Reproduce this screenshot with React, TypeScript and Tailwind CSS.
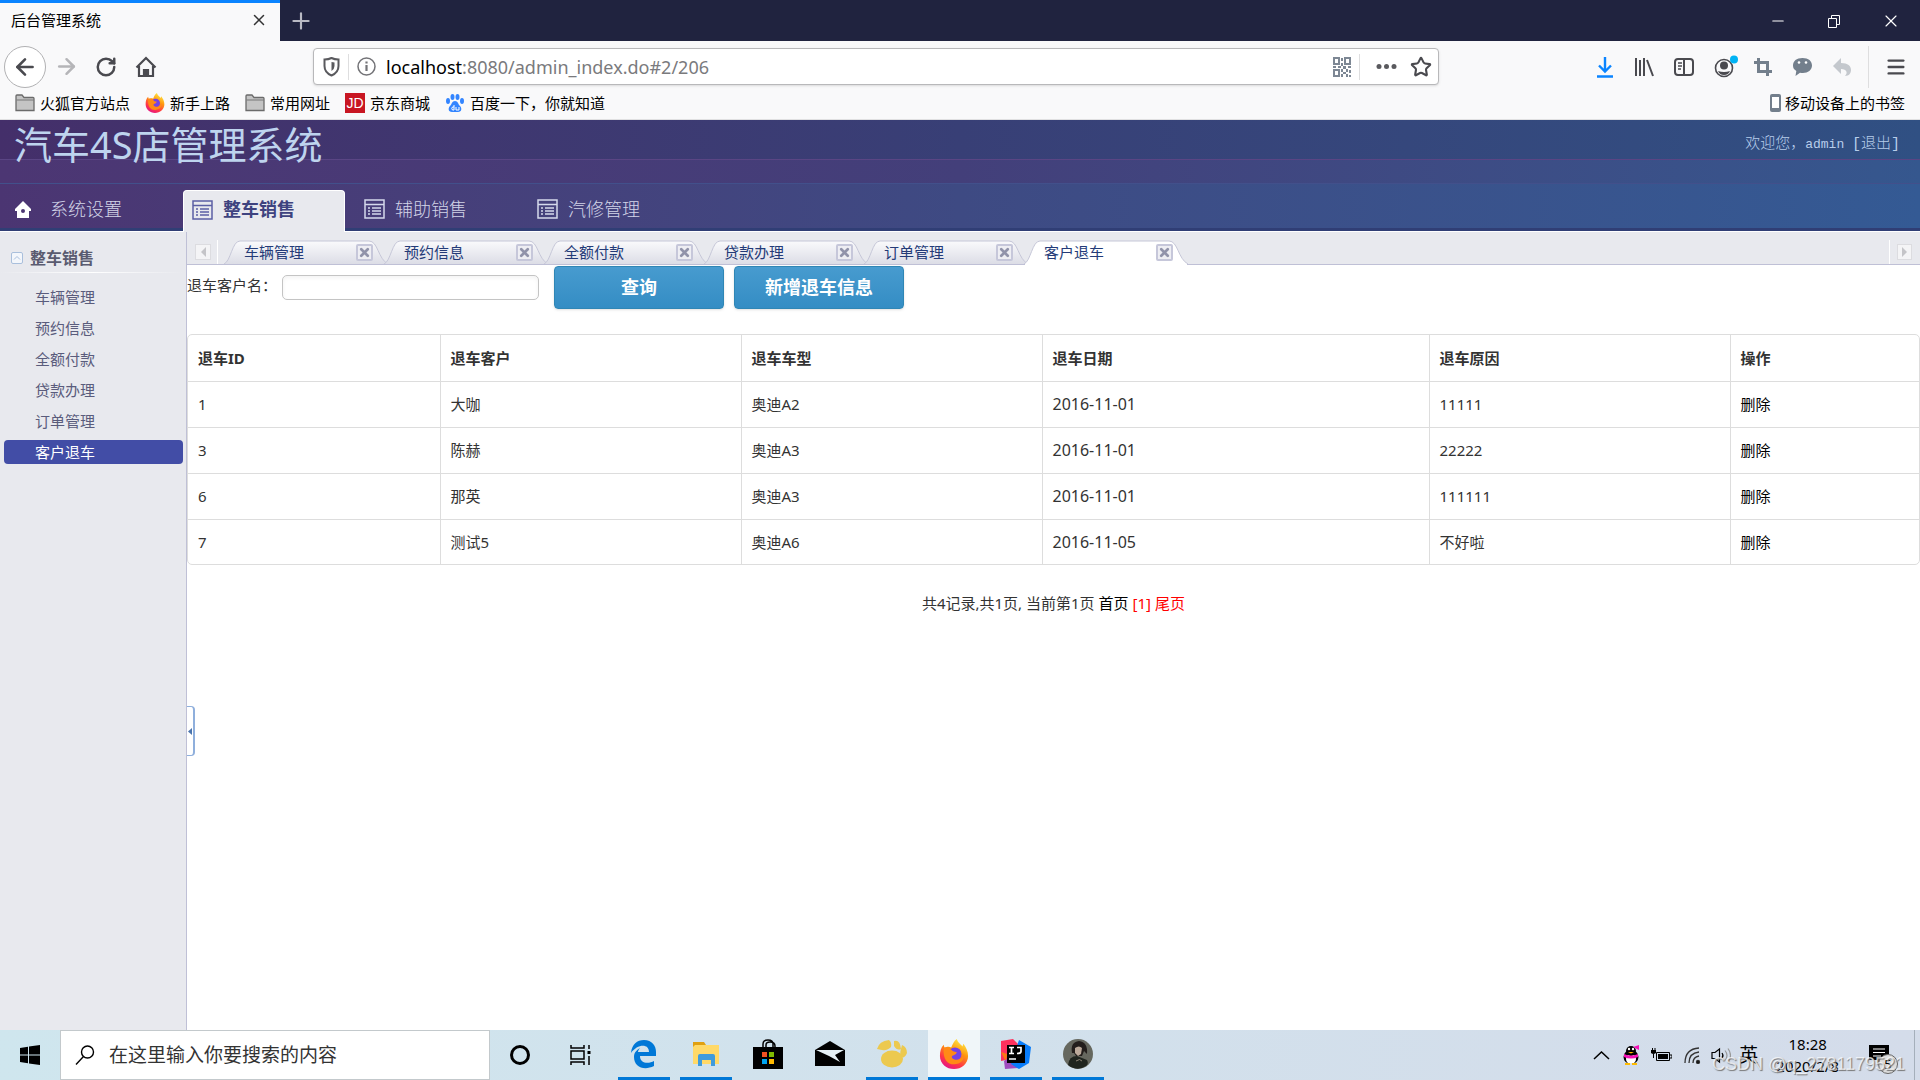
import React, { useState } from "react";
import {
  ArrowLeft,
  ArrowRight,
  Menu,
  Minus,
  Plus,
  RotateCw,
  Star,
  X,
} from "lucide-react";

const menus = ["系统设置", "整车销售", "辅助销售", "汽修管理"];
const pages = ["车辆管理", "预约信息", "全额付款", "贷款办理", "订单管理", "客户退车"];
const heads = ["退车ID", "退车客户", "退车车型", "退车日期", "退车原因", "操作"];
const rows = [
  { id: 1, name: "大咖", car: "奥迪A2", date: "2016-11-01", reason: "11111" },
  { id: 3, name: "陈赫", car: "奥迪A3", date: "2016-11-01", reason: "22222" },
  { id: 6, name: "那英", car: "奥迪A3", date: "2016-11-01", reason: "111111" },
  { id: 7, name: "测试5", car: "奥迪A6", date: "2016-11-05", reason: "不好啦" },
];

function FolderIcon() {
  return (
    <svg width="20" height="18" viewBox="0 0 20 18">
      <path d="M1 16.500V2q0-1 1-1h5l2 2.500h9q1 0 1 1v12z" fill="#c4c4c4" stroke="#6b6b6b" strokeWidth="1.300" />
      <path d="M1.500 6H19" stroke="#777" />
    </svg>
  );
}

function FirefoxIcon({ size }: { size: number }) {
  return (
    <svg width={size} height={size} viewBox="0 0 32 32">
      <defs>
        <linearGradient id="fox" x1="0.8" y1="0" x2="0.3" y2="1">
          <stop offset="0" stopColor="#fff44f" />
          <stop offset="0.4" stopColor="#ff980e" />
          <stop offset="0.75" stopColor="#ff3647" />
          <stop offset="1" stopColor="#e31587" />
        </linearGradient>
      </defs>
      <path d="M19 0c1 4 4 5 6 8l1-3c3 4 5 8 5 13 0 8-7 14-15 14S1 26 1 18c0-5 1-9 4-12l1 4c2-2 5-2 7-1 2-4 3-7 6-9z" fill="url(#fox)" />
      <circle cx="17" cy="16" r="7" fill="#7542e5" />
      <path d="M5 9c4-1 7 1 10 4l4 1c-1 3-4 3-5 4s0 4 5 4 6-3 7-6c2 6-3 11-10 11C9 27 4 22 5 9z" fill="#ff8a16" />
    </svg>
  );
}

function ListIcon({ active }: { active: boolean }) {
  const color = active ? "#5b5fa5" : "#d5d9ec";
  return (
    <svg width="21" height="20" viewBox="0 0 21 20" fill="none" stroke={color} strokeWidth="1.500">
      <path d="M1 1h19v18H1zM1 5.500h19M4 9h2M8 9h9M4 12h2M8 12h9M4 15h2M8 15h9" />
    </svg>
  );
}

function BrowserTop() {
  return (
    <div className="shrink-0 bg-[#f9f9fa] text-[15px] leading-5 text-black">
      <div className="flex h-[41px] items-stretch bg-[#20233f]">
        <div className="flex w-[280px] items-center justify-between border-t-[3px] border-[#0a84ff] bg-[#f9f9fa] pb-1 pl-[11px] pr-3">
          <span>后台管理系统</span>
          <button aria-label="关闭标签页"><X size={18} strokeWidth={2} color="#333" /></button>
        </div>
        <button aria-label="新标签页" className="ml-2 self-center"><Plus size={26} strokeWidth={2} color="#b9bac4" /></button>
        <div className="ml-auto flex items-center gap-[38px] pr-[19px] text-white">
          <button aria-label="最小化"><Minus size={18} strokeWidth={1.4} /></button>
          <button aria-label="还原">
            <svg width="18" height="18" viewBox="0 0 18 18" fill="none" stroke="white"><path d="M3.500 6.500h8v9h-8zM6.500 6V3.500h8v9H12" /></svg>
          </button>
          <button aria-label="关闭"><X size={20} strokeWidth={1.4} /></button>
        </div>
      </div>
      <div className="flex h-[51px] items-center pl-1 pr-[13px] text-[#4a4a4f]">
        <button aria-label="后退" className="flex size-[42px] items-center justify-center rounded-full border border-[#b1b1b3] bg-white"><ArrowLeft size={26} strokeWidth={2.4} /></button>
        <button aria-label="前进" className="ml-2 text-[#b5b5b8]"><ArrowRight size={25} strokeWidth={2.4} /></button>
        <button aria-label="刷新" className="ml-4"><RotateCw size={22} strokeWidth={2.7} /></button>
        <button aria-label="主页" className="ml-[18px]">
          <svg width="22" height="22" viewBox="0 0 22 22" fill="none" stroke="#4a4a4f" strokeWidth="2.200"><path d="M1.500 11.500 11 2l9.500 9.500M4 10v10h14V10" /><path d="M9 20v-6h4v6" fill="#4a4a4f" /></svg>
        </button>
        <div className="ml-[156px] flex h-[37px] w-[1126px] items-center rounded-sm border border-[#b8b8ba] bg-white shadow-sm">
          <svg className="ml-[9px]" width="17" height="20" viewBox="0 0 17 20" fill="none" stroke="#5a5a5e" strokeWidth="2"><path d="M1.500 2.500q4 0 7-1.500 3 1.500 7 1.500V9q0 6.500-7 9.500-7-3-7-9.500z" /><path d="M8.500 5v9q3-2 3-5V5.500z" fill="#5a5a5e" stroke="none" /></svg>
          <div className="mx-2 h-[26px] w-px bg-[#dededf]" />
          <svg width="19" height="19" viewBox="0 0 19 19" fill="none" stroke="#737377" strokeWidth="1.500"><circle cx="9.500" cy="9.500" r="8.500" /><path d="M9.500 8v6M9.500 4.500v2" strokeWidth="2.200" /></svg>
          <div className="ml-[10px] flex-1 font-['Noto_Sans',sans-serif] text-[18px] text-[#7a7a7d]"><span className="text-black">localhost</span>:8080/admin_index.do#2/206</div>
          <svg width="18" height="20" viewBox="0 0 18 20" fill="#7d8794">
            <path fillRule="evenodd" d="M0 0h7v8H0zM2 2v4h3V2zM11 0h7v8h-7zM13 2v4h3V2zM0 12h7v8H0zM2 14v4h3v-4z" />
            <path d="M8 1h2v3H8zM8 6h2v3H8zM0 9h3v2H0zM5 9h3v2H5zM10 9h3v3h-3zM15 9h3v2h-3zM8 12h2v3H8zM13 12h2v3h-2zM16 13h2v3h-2zM10 15h3v2h-3zM8 17h2v3H8zM13 17h2v3h-2zM16 18h2v2h-2z" />
          </svg>
          <div className="mx-2 h-[26px] w-px bg-[#dededf]" />
          <button aria-label="页面操作" className="ml-2">
            <svg width="21" height="7" viewBox="0 0 21 7" fill="#5a5a5e"><circle cx="3" cy="3.500" r="2.500" /><circle cx="10.500" cy="3.500" r="2.500" /><circle cx="18" cy="3.500" r="2.500" /></svg>
          </button>
          <button aria-label="收藏" className="ml-[13px] mr-[6px]"><Star size={22} strokeWidth={2.3} /></button>
        </div>
        <div className="ml-auto flex items-center gap-5">
          <svg width="18" height="22" viewBox="0 0 18 22" fill="none" stroke="#0a84ff" strokeWidth="2.400"><path d="M9 1v14M3 9.500l6 6 6-6M1 20.500h16" /></svg>
          <svg width="20" height="20" viewBox="0 0 20 20" fill="none" stroke="#4a4a4f" strokeWidth="2"><path d="M2 1v18M6 3v16M10 1v18M13 3l6 16" /></svg>
          <svg width="20" height="20" viewBox="0 0 20 20" fill="none" stroke="#4a4a4f" strokeWidth="2"><rect x="1" y="2" width="18" height="16" rx="3" /><path d="M10 2v16" /><path d="M4 6h4M4 9h4M4 12h3" strokeWidth="1.300" /></svg>
          <svg width="24" height="24" viewBox="0 0 24 24"><circle cx="10" cy="13" r="8.500" fill="none" stroke="#4a4a4f" strokeWidth="1.600" /><circle cx="10" cy="10.500" r="4" fill="#4a4a4f" /><path d="M4 16q6 2 12 0-1.500 4-6 4t-6-4z" fill="#4a4a4f" /><circle cx="20" cy="4.500" r="4" fill="#00b3f4" /></svg>
          <svg className="-ml-1" width="18" height="18" viewBox="0 0 18 18" fill="none" stroke="#737f8c" strokeWidth="3"><path d="M4.500 0v13.500H18M0 4.500h13.500V18" /></svg>
          <svg width="21" height="20" viewBox="0 0 21 20"><path d="M10.500 1c6 0 9.500 3 9.500 7.500S16 16 11 16c-1 0-2 0-3-.3L3.500 19l.8-5C2 12.500 1 11 1 8.500 1 4 4.500 1 10.500 1z" fill="#737f8c" /><circle cx="7" cy="5.500" r="1.300" fill="white" /><circle cx="14" cy="5.500" r="1.300" fill="white" /></svg>
          <svg width="19" height="20" viewBox="0 0 19 20"><path d="M8 1v5c7 0 10 3 10 7 0 3-2 6-6 6 3-3 2-7-4-7v5L0 9z" fill="#c4c8cd" /></svg>
          <div className="-ml-1 h-[42px] w-px bg-[#dededf]" />
          <button aria-label="菜单" className="-ml-1"><Menu size={22} strokeWidth={2.6} /></button>
        </div>
      </div>
      <div className="flex h-7 items-center border-b border-[#e0e0e1] pb-[6px] pl-[15px] pr-[15px]">
        <a href="#" className="flex items-center gap-[5px]"><FolderIcon />火狐官方站点</a>
        <a href="#" className="ml-[15px] flex items-center gap-[5px]"><FirefoxIcon size={20} />新手上路</a>
        <a href="#" className="ml-[15px] flex items-center gap-[5px]"><FolderIcon />常用网址</a>
        <a href="#" className="ml-[15px] flex items-center gap-[5px]"><span className="flex size-5 items-center justify-center bg-[#c81623] font-['Liberation_Sans',sans-serif] text-[14px] text-white">JD</span>京东商城</a>
        <a href="#" className="ml-[15px] flex items-center gap-[5px]">
          <svg width="20" height="20" viewBox="0 0 20 20" fill="#3385ff"><ellipse cx="3" cy="8" rx="2" ry="3" /><ellipse cx="7.500" cy="4" rx="2" ry="3" /><ellipse cx="12.500" cy="4" rx="2" ry="3" /><ellipse cx="17" cy="8" rx="2" ry="3" /><path d="M10 8c3 0 3 3 5 5s2 6-2 6H7c-4 0-4-4-2-6s2-5 5-5z" /><path d="M9 12v5H7.500q-1.500-1.500 0-3H9M11 14v3h3v-3" fill="none" stroke="white" /></svg>
          百度一下，你就知道
        </a>
        <a href="#" className="ml-auto flex items-center gap-1">
          <svg width="11" height="18" viewBox="0 0 11 18"><rect width="11" height="18" rx="2" fill="#737f8c" /><path d="M2 3h7v11H2z" fill="white" /></svg>
          移动设备上的书签
        </a>
      </div>
    </div>
  );
}

function Header() {
  return (
    <header className="shrink-0 border-b border-white">
      <div className="flex h-[39px] items-start justify-between bg-linear-to-r from-[#442f6a] via-[#383f76] to-[#305083] pl-[14px] pr-5">
        <h1 className="relative z-10 whitespace-nowrap text-[38px] font-normal leading-[48px] text-[#bed4ee]">汽车4S店管理系统</h1>
        <div className="pt-[15px] font-['Liberation_Mono','Noto_Sans_CJK_SC',monospace] text-[15px] font-light leading-5 text-[#b7cdeb]">
          欢迎您，<span className="text-[13px]">admin </span>
          <a href="#">[退出]</a>
        </div>
      </div>
      <div className="h-[25px] border-y border-b-[#42508b] border-t-[#5a4584] bg-linear-to-r from-[#4c3673] via-[#433f7a] to-[#35578e]" />
      <nav className="flex h-[47px] items-end gap-[11px] border-b-[3px] border-[#303e75] bg-linear-to-r from-[#4b3572] via-[#3e4a83] to-[#345a94]">
        {menus.map((item: any, index: any) => {
          const active = index === 1;
          return (
            <a
              href="#"
              key={item}
              className={
                active
                  ? "-mb-1 flex h-[42px] w-[162px] items-center gap-[10px] rounded-t-sm border border-b-0 border-white bg-[#e8e9ee] pb-1 pl-2 text-[18px] font-bold text-[#3e437f]"
                  : index === 0
                    ? "flex h-[38px] w-[172px] items-center gap-[19px] pl-[15px] text-[18px] font-light text-[#d3d5e8]"
                    : "flex h-[38px] w-[162px] items-center gap-[10px] pl-2 text-[18px] font-light text-[#d3d5e8]"
              }
            >
              {index === 0 ? (
                <svg width="16" height="17" viewBox="0 0 16 17" fill="white"><path d="M8 0 16 8v2h-2v7H2v-7H0V8z" /><circle cx="8" cy="10" r="2" fill="#4b3572" /></svg>
              ) : (
                <ListIcon active={active} />
              )}
              {item}
            </a>
          );
        })}
      </nav>
    </header>
  );
}

function Sidebar() {
  return (
    <aside className="w-[187px] shrink-0 border-r border-[#bfc0d6] bg-[#e8e9ee] pr-[3px] pt-[14px]">
      <div className="flex items-center gap-[7px] pl-[11px] text-[16px] font-bold leading-6 text-[#5a5b70]">
        <svg width="12" height="12" viewBox="0 0 12 12" fill="none" stroke="#a9bfdc"><rect x=".5" y=".5" width="11" height="11" rx="1.500" fill="#f3f6fb" /><path d="m3 7.500 3-3 3 3" /></svg>
        整车销售
      </div>
      <div className="mb-3 mt-[2px] h-px bg-linear-to-r from-[#e8e9ee] via-white to-[#e8e9ee]" />
      <ul className="flex flex-col gap-[7px] pl-1">
        {pages.map((item: any, index: any) => (
          <li key={item}>
            <a
              href="#"
              className={
                index === 5
                  ? "block rounded-sm bg-[#424da6] pl-[31px] text-[15px] leading-6 text-white"
                  : "block pl-[31px] text-[15px] leading-6 text-[#5a5c7c]"
              }
            >
              {item}
            </a>
          </li>
        ))}
      </ul>
    </aside>
  );
}

function TabBar() {
  return (
    <div className="flex h-[33px] items-end border-b border-[#bfc0d6] bg-[#e8e9ee] pl-2">
      <button aria-label="向左" className="mb-1 flex size-4 items-center justify-center border border-[#dcdce0] bg-[#f4f4f6] text-[#c4c4c8]">
        <svg width="5" height="10" viewBox="0 0 5 10" fill="currentColor"><path d="M5 0v10L0 5z" /></svg>
      </button>
      <div className="ml-[6px] h-6 w-px bg-white" />
      <div className="ml-[6px] flex flex-1">
        {pages.map((item: any, index: any) => (
          <div key={item} className="relative flex h-6 w-[160px] items-center justify-between pl-5 pr-[11px]">
            <svg className="absolute left-0 top-0 h-[25px] w-[164px]" viewBox="0 0 164 25">
              <defs>
                <linearGradient id="tab" x1="0" y1="0" x2="0" y2="1"><stop offset="0" stopColor="#fafafc" /><stop offset="1" stopColor="#dcdde6" /></linearGradient>
              </defs>
              <path d="M0 24C7 21 8 1 16 1h129c9 0 9 18 19 23" fill={index === 5 ? "white" : "url(#tab)"} stroke="#c6c7d8" />
              {index === 5 && <path d="M1 24.500h162" stroke="white" />}
            </svg>
            <a href="#" className="relative text-[15px] leading-6 text-[#243b78]">{item}</a>
            <button aria-label={"关闭" + item} className="relative flex size-[17px] items-center justify-center rounded-xs border-2 border-[#c6c7da] bg-[#eeeef3]">
              <X size={13} strokeWidth={5} color="#9193aa" />
            </button>
          </div>
        ))}
      </div>
      <div className="h-6 w-px bg-white" />
      <button aria-label="向右" className="mb-1 ml-[7px] mr-2 flex h-4 w-[15px] items-center justify-center border border-[#dcdce0] bg-[#f4f4f6] text-[#c4c4c8]">
        <svg width="5" height="10" viewBox="0 0 5 10" fill="currentColor"><path d="M0 0v10l5-5z" /></svg>
      </button>
    </div>
  );
}

function Content() {
  const [name, setName] = useState("");
  return (
    <main className="relative min-w-0 flex-1 bg-white text-[15px] text-[#333]">
      <TabBar />
      <div className="flex items-center pt-px">
        <label htmlFor="name" className="pb-1">退车客户名：</label>
        <input
          id="name"
          value={name}
          onChange={(e) => setName(e.target.value)}
          className="ml-[5px] h-[25px] w-[257px] rounded-[5px] border border-[#c4c4c4] px-2 shadow-inner"
        />
        <button className="ml-[15px] h-[43px] w-[170px] rounded-[4px] border border-[#2f86b5] bg-linear-to-b from-[#479bcf] to-[#348dc4] text-[18px] font-bold text-white shadow-sm">查询</button>
        <button className="ml-[10px] h-[43px] w-[170px] rounded-[4px] border border-[#2f86b5] bg-linear-to-b from-[#479bcf] to-[#348dc4] text-[18px] font-bold text-white shadow-sm">新增退车信息</button>
      </div>
      <div className="mt-[25px] overflow-hidden rounded-[5px] border border-[#ddd]">
        <table className="w-full table-fixed text-left">
          <colgroup>
            <col className="w-[252px]" />
            <col className="w-[301px]" />
            <col className="w-[301px]" />
            <col className="w-[387px]" />
            <col className="w-[301px]" />
            <col />
          </colgroup>
          <thead>
            <tr className="h-[46px] border-b border-[#ddd]">
              {heads.map((item: any) => (
                <th key={item} className="border-l border-[#ddd] px-[10px] font-bold first:border-l-0">{item}</th>
              ))}
            </tr>
          </thead>
          <tbody>
            {rows.map((row: any) => (
              <tr key={row.id} className="h-[46px] border-b border-[#ddd] last:h-[45px] last:border-b-0">
                <td className="px-[10px]">{row.id}</td>
                <td className="border-l border-[#ddd] px-[10px]">{row.name}</td>
                <td className="border-l border-[#ddd] px-[10px]">{row.car}</td>
                <td className="border-l border-[#ddd] px-[10px] text-[16px]">{row.date}</td>
                <td className="border-l border-[#ddd] px-[10px]">{row.reason}</td>
                <td className="border-l border-[#ddd] px-[10px]"><a href="#" className="text-black">删除</a></td>
              </tr>
            ))}
          </tbody>
        </table>
      </div>
      <div className="mt-7 flex justify-center gap-1 leading-5">
        <span>共4记录,共1页, 当前第1页</span>
        <a href="#" className="text-black">首页</a>
        <span className="text-[#f00]">[1]</span>
        <a href="#" className="text-[#f00]">尾页</a>
      </div>
      <button aria-label="收起" className="absolute left-0 top-[474px] flex h-[50px] w-2 items-center justify-center rounded-r-sm border border-l-0 border-r-2 border-[#8fafdc] bg-white">
        <svg width="4" height="7" viewBox="0 0 4 7" fill="#4a74ad"><path d="M4 0v7L0 3.500z" /></svg>
      </button>
    </main>
  );
}

const apps = [
  {
    name: "Edge", cls: "border-[#0078d7]",
    icon: <svg width="26" height="30" viewBox="0 0 26 30"><path d="M0 14C1 5 6 1 13 1c8 0 12 6 12 12v4H9c0 8 9 8 14 5v5C13 32 3 28 3 18c0-5 3-7 6-9-1 1-2 3-2 4h11C18 4 6 5 0 14z" fill="#0078d7" /></svg>,
  },
  {
    name: "文件资源管理器", cls: "border-[#0078d7]",
    icon: <svg width="28" height="26" viewBox="0 0 28 26"><path d="M1 1h11l2 3v4H1z" fill="#e0a010" /><path d="M3 4h24v19H1V6z" fill="#ffd968" /><path d="M6 25V15q0-2 2-2h13q2 0 2 2v10h-4v-6h-9v6z" fill="#3f9bdc" /></svg>,
  },
  {
    name: "Microsoft Store", cls: "border-transparent",
    icon: <svg width="30" height="30" viewBox="0 0 30 30"><path d="M10 9V5q0-4 5-4t5 4v4M13 9V6q0-3 4-3 5 0 5 4v2" fill="none" stroke="black" strokeWidth="1.500" /><path d="M0 8h30v22H0z" /><path d="M9 13h5v5H9z" fill="#f25022" /><path d="M16 13h5v5h-5z" fill="#7fba00" /><path d="M9 20h5v5H9z" fill="#00a4ef" /><path d="M16 20h5v5h-5z" fill="#ffb900" /></svg>,
  },
  {
    name: "邮件", cls: "border-transparent",
    icon: <svg width="30" height="25" viewBox="0 0 30 25"><path d="M0 9 15 0l15 9v16H0z" /><path d="M1 9h28l-9 5 5 7-11-6z" fill="#e6f1f6" /></svg>,
  },
  {
    name: "Shell", cls: "border-[#0078d7]",
    icon: <svg width="30" height="28" viewBox="0 0 30 28" fill="#ecc94f"><path d="M0 9Q2 1 12 0q3 2 2 7-4 5-14 2zM17 1q6-2 7 8-4 2-7-3zM25 5q5 2 5 8-3 7-7 3 0-5 2-11z" /><ellipse cx="15" cy="19" rx="11" ry="8.500" /></svg>,
  },
  { name: "Firefox", cls: "border-[#0078d7] bg-[#f0f6f9]", icon: <FirefoxIcon size={30} /> },
  {
    name: "IntelliJ IDEA", cls: "border-[#0078d7]",
    icon: <svg width="30" height="30" viewBox="0 0 30 30"><path d="M0 2 12 0l8 8-10 12-10 2z" fill="#fe315d" /><path d="m0 13 6 2-1 8z" fill="#f97a12" /><path d="m3 22 7-5 8 12-14 1z" fill="#a04bbf" /><path d="m18 1 12 7-2 16-10 6-8-5z" fill="#087cfa" /><path d="M6 6h18v18H6z" /><path d="M8 20h7M8 8.500h5M10.500 8.500v6M8 14.500h5M16 8.500h4v4q0 2-4 2" stroke="white" strokeWidth="1.700" fill="none" /></svg>,
  },
  {
    name: "头像", cls: "border-[#0078d7]",
    icon: <svg width="30" height="30" viewBox="0 0 30 30"><circle cx="15" cy="15" r="15" fill="#66685f" /><path d="M9 14Q7 3 16 2q9 1 8 13l-3-3-2 5h-6l-2-3z" fill="#231e1c" /><path d="M12 9q4-3 7 0l-1 6-3 2-3-3z" fill="#bba99a" /><path d="M5 26q1-9 9-9l10 4q2 4-1 6-9 6-18-1z" fill="#20251f" /><path d="M13 22q4-3 6 0" stroke="#8c8275" fill="none" /></svg>,
  },
];

function Taskbar() {
  return (
    <footer className="relative flex h-[50px] shrink-0 items-stretch bg-linear-to-r from-[#cfe6ee] to-[#d4dcea] text-black">
      <button aria-label="开始" className="flex w-[60px] items-center justify-center">
        <svg width="20" height="20" viewBox="0 0 20 20"><path d="M0 3l8-1.200V9.500H0zM9 1.600 20 0v9.500H9zM0 10.500h8v7.700L0 17zM9 10.500h11V20L9 18.400z" /></svg>
      </button>
      <label className="flex w-[430px] items-center gap-[14px] border border-[#c3c9cc] bg-white pl-[14px]">
        <svg width="20" height="20" viewBox="0 0 20 20" fill="none" stroke="black" strokeWidth="1.400"><circle cx="12.500" cy="7" r="6" /><path d="M8.500 11.500 1 19.500" /></svg>
        <input aria-label="搜索" placeholder="在这里输入你要搜索的内容" className="w-80 text-[19px] leading-6 outline-none placeholder:text-[#333]" />
      </label>
      <button aria-label="Cortana" className="flex w-[60px] items-center justify-center"><span className="size-5 rounded-full border-[3px] border-black" /></button>
      <button aria-label="任务视图" className="flex w-[60px] items-center justify-center">
        <svg width="21" height="20" viewBox="0 0 21 20" fill="none" stroke="black" strokeWidth="1.500"><path d="M1 0v3h13V0M1 6h13v8H1zM1 20v-3h13v3M19 0v4M19 11v9" /><path d="M17.500 6h3v3h-3z" fill="black" stroke="none" /></svg>
      </button>
      <div className="ml-2 flex gap-[10px]">
        {apps.map((app: any) => (
          <button key={app.name} aria-label={app.name} className={"flex w-[52px] items-center justify-center border-b-[3px] " + app.cls}>{app.icon}</button>
        ))}
      </div>
      <div className="ml-auto flex items-center">
        <svg width="17" height="9" viewBox="0 0 17 9" fill="none" stroke="black" strokeWidth="1.500"><path d="m1 8 7.500-7L16 8" /></svg>
        <svg className="ml-[13px]" width="17" height="20" viewBox="0 0 17 20"><ellipse cx="8" cy="12" rx="7.500" ry="7" /><ellipse cx="8" cy="14" rx="5" ry="5" fill="white" /><circle cx="8" cy="6" r="5" /><circle cx="6" cy="4" r="1.200" fill="white" /><circle cx="10" cy="4" r="1.200" fill="white" /><path d="M5 7h6l-3 1.500z" fill="#fb0" /><path d="M1 9q7 3 14 0v3q-7 3-14 0zM10 2l6-2v5z" fill="#f512b8" /><path d="M2 18h5v2H2zM9 18h5v2H9z" fill="#fb0" /></svg>
        <svg className="ml-[11px]" width="21" height="14" viewBox="0 0 21 14"><path d="M5.500 4.500h13v8h-13zM19 7h2v3h-2" fill="none" stroke="black" /><path d="M7 6h10v5H7zM0 2h5v3q-2.500 2-5 0zM1 0h1v2H1zM3.500 0h1v2h-1zM2 5h1v5H2z" /></svg>
        <svg className="ml-3" width="17" height="17" viewBox="0 0 17 17" fill="none" stroke="#333" strokeWidth="1.300"><path d="M1 16Q1 2 15 1M5 16Q5 6 15 5M9 16q0-6 6-7" /><circle cx="14" cy="15" r="1.500" fill="black" /></svg>
        <svg className="ml-[10px]" width="20" height="17" viewBox="0 0 20 17" fill="none" stroke="black" strokeWidth="1.200"><path d="M1 5.500h3L8.500 2v13L4 11.500H1zM11 6q2 2.500 0 5" /><path d="M14 3.500q4 5 0 10M17 1.500q5 7 0 14" stroke="#999" /></svg>
        <span className="ml-2 text-[19px] leading-6">英</span>
        <time className="ml-[18px] text-center font-['Noto_Sans',sans-serif] text-[15px] leading-[22px]">18:28<br />2020/2/8</time>
        <div className="relative ml-[30px] mr-[25px] size-5">
          <svg width="20" height="20" viewBox="0 0 20 20"><path d="M0 0h20v15h-8l-4 4v-4H0z" /><path d="M4 4h12M4 7.500h12M4 11h8" stroke="white" /></svg>
          <span className="absolute left-[9px] top-[9px] flex size-5 items-center justify-center rounded-full border border-[#666] bg-[#dedede] text-[13px] leading-4">5</span>
        </div>
        <div className="h-full w-[6px] border-l border-[#a5afbb]" />
      </div>
      <span className="absolute bottom-1 right-[15px] font-['Liberation_Sans',sans-serif] text-[18px] leading-6 text-white/70 [text-shadow:1px_1px_1px_#777]">CSDN @q_2781179521</span>
    </footer>
  );
}

function App() {
  return (
    <div className="flex min-h-screen flex-col font-['Noto_Sans','Noto_Sans_CJK_SC',sans-serif]">
      <BrowserTop />
      <Header />
      <div className="flex flex-1">
        <Sidebar />
        <Content />
      </div>
      <Taskbar />
    </div>
  );
}

export default App;
